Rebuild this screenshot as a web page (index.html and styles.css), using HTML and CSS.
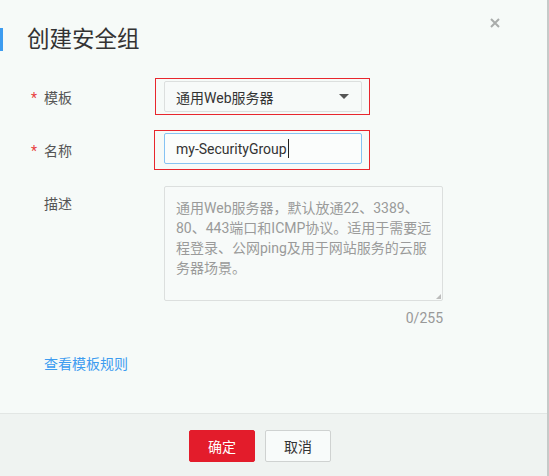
FILE: index.html
```html
<!DOCTYPE html>
<html lang="zh-CN">
<head>
<meta charset="utf-8">
<title>创建安全组</title>
<link rel="stylesheet" href="styles.css">
</head>
<body>
<div class="dialog">
  <div class="main">
    <div class="header">
      <h1 class="title">创建安全组</h1>
      <button class="close" aria-label="关闭">
        <svg width="10" height="10" viewBox="0 0 10 10"><path d="M1 1L9 9M9 1L1 9" stroke="#a9acab" stroke-width="2" fill="none"/></svg>
      </button>
    </div>
    <div class="form">
      <div class="row row-template">
        <label class="label"><span class="star">*</span>模板</label>
        <div class="mark mark-1">
          <div class="select">
            <span>通用Web服务器</span>
            <span class="caret"></span>
          </div>
        </div>
      </div>
      <div class="row row-name">
        <label class="label"><span class="star">*</span>名称</label>
        <div class="mark mark-2">
          <div class="input">my-SecurityGroup<span class="cursor"></span></div>
        </div>
      </div>
      <div class="row row-desc">
        <label class="label label-plain">描述</label>
        <div class="desc-col">
          <div class="textarea">通用Web服务器，默认放通22、3389、<br>80、443端口和ICMP协议。适用于需要远<br>程登录、公网ping及用于网站服务的云服<br>务器场景。<span class="grip"></span></div>
          <div class="counter">0/255</div>
        </div>
      </div>
      <a class="link" href="#">查看模板规则</a>
    </div>
  </div>
  <div class="footer">
    <button class="btn btn-primary">确定</button>
    <button class="btn btn-default">取消</button>
  </div>
</div>
</body>
</html>
```

FILE: styles.css
```css
html, body {
  margin: 0;
  padding: 0;
}
body {
  width: 549px;
  height: 476px;
  overflow: hidden;
  background: #f6faf8;
  font-family: Roboto, "Noto Sans CJK SC", sans-serif;
  font-size: 14px;
  color: #333;
}
.dialog {
  width: 549px;
  height: 476px;
  box-sizing: border-box;
  border-right: 2px solid #c6c9c8;
  display: flex;
  flex-direction: column;
}
.main {
  flex: 1;
}
.header {
  position: relative;
  padding-top: 27px;
  height: 51px;
  box-sizing: border-box;
}
.title {
  position: relative;
  margin: 0;
  font-size: 22.5px;
  font-weight: normal;
  line-height: 26px;
  color: #333;
  padding-left: 27px;
  height: 24px;
  display: flex;
  align-items: center;
}
.title::before {
  content: "";
  position: absolute;
  left: 0;
  top: 1px;
  width: 3px;
  height: 23px;
  background: #3d9cf0;
}
.close {
  position: absolute;
  top: 18px;
  left: 490px;
  width: 10px;
  height: 10px;
  padding: 0;
  border: none;
  background: none;
  display: block;
}
.close svg { display: block; }
.form {
  padding-top: 27px;
}
.row {
  display: flex;
  align-items: center;
}
.label {
  width: 155px;
  box-sizing: border-box;
  padding-left: 31px;
  color: #555;
  font-size: 14px;
  display: flex;
  align-items: center;
}
.star {
  color: #e8413f;
  width: 13px;
  font-size: 14px;
  position: relative;
  top: 1px;
}
.label-plain {
  padding-left: 44px;
}
.mark {
  border: 1.5px solid #e8262d;
  box-sizing: border-box;
  width: 215px;
}
.mark-1 {
  padding: 2px 7px 2px 8px;
}
.row-name {
  margin-top: 15px;
}
.mark-2 {
  margin-left: -1px;
  width: 216px;
  padding: 2px 7px 5px 9px;
}
.select {
  height: 31px;
  box-sizing: border-box;
  border: 1px solid #dcdfde;
  border-radius: 2px;
  background: #f7faf9;
  display: flex;
  align-items: center;
  justify-content: space-between;
  padding: 0 12px 0 11px;
  color: #333;
  font-size: 14px;
}
.caret {
  width: 0;
  height: 0;
  border-left: 5px solid transparent;
  border-right: 5px solid transparent;
  border-top: 5px solid #555;
}
.input {
  height: 31px;
  box-sizing: border-box;
  border: 1px solid #86c3f3;
  border-radius: 2px;
  background: #fbfdfc;
  display: flex;
  align-items: center;
  padding-left: 11px;
  color: #333;
  font-size: 14px;
}
.cursor {
  display: inline-block;
  width: 1px;
  height: 19px;
  background: #222;
  margin-left: 1px;
}
.row-desc {
  margin-top: 16px;
  align-items: flex-start;
}
.row-desc .label {
  padding-top: 7px;
}
.desc-col {
  margin-left: 9px;
  width: 279px;
}
.textarea {
  position: relative;
  height: 115px;
  box-sizing: border-box;
  border: 1px solid #dcdfde;
  border-radius: 2px;
  background: #f7faf9;
  padding: 11px 11px;
  color: #9a9a9a;
  font-size: 14px;
  line-height: 20px;
  white-space: nowrap;
}
.grip {
  position: absolute;
  right: 1px;
  bottom: 1px;
  width: 0;
  height: 0;
  border-left: 5px solid transparent;
  border-bottom: 5px solid #bcbcbc;
}
.counter {
  text-align: right;
  color: #999;
  font-size: 14px;
  line-height: 20px;
  margin-top: 7px;
}
.link {
  display: block;
  margin-top: 26px;
  margin-left: 44px;
  color: #3d9cf0;
  text-decoration: none;
  font-size: 14px;
  line-height: 20px;
  width: max-content;
}
.footer {
  height: 63px;
  box-sizing: border-box;
  border-top: 1px solid #e2e6e4;
  background: #eff3f1;
  display: flex;
  align-items: flex-start;
  padding-top: 16px;
  padding-left: 189px;
  gap: 10px;
}
.btn {
  width: 66px;
  height: 32px;
  box-sizing: border-box;
  border-radius: 2px;
  font-family: Roboto, "Noto Sans CJK SC", sans-serif;
  font-size: 14px;
  padding: 0;
  cursor: pointer;
}
.btn-primary {
  background: #e31c2b;
  border: 1px solid #e31c2b;
  color: #fff;
}
.btn-default {
  background: #f8fbfa;
  border: 1px solid #cfd2d1;
  color: #333;
}
```
